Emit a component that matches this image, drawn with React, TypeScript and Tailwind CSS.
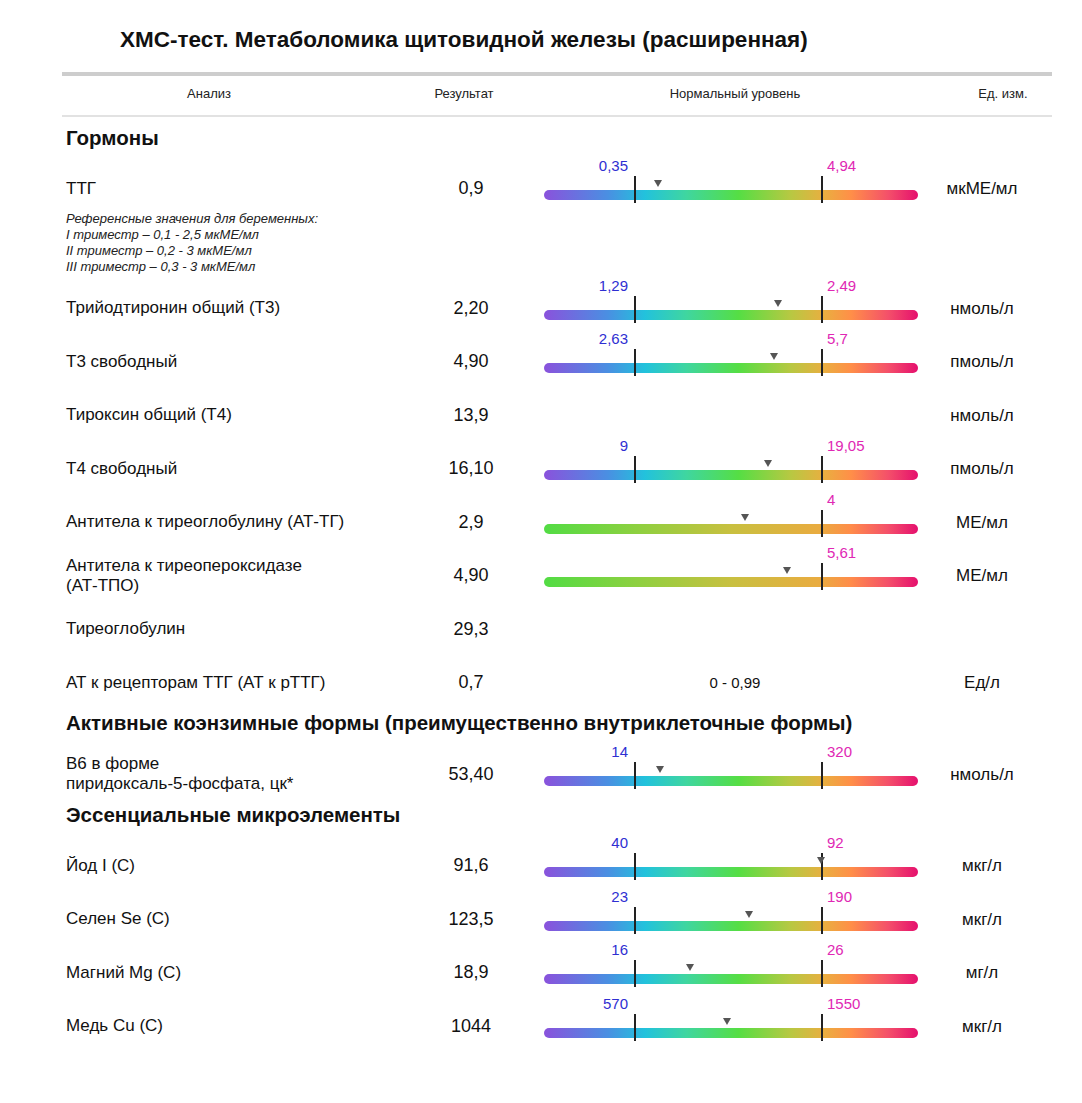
import React from 'react';

type Row = {
  name: string[];
  value: string;
  unit?: string;
  low?: string;
  high?: string;
  mark?: number; // x of triangle from bar start, px
  text?: string;
  note?: string[];
};

type Section = { title: string; rows: Row[] };

const sections: Section[] = [
  {
    title: 'Гормоны',
    rows: [
      {
        name: ['ТТГ'],
        value: '0,9',
        unit: 'мкМЕ/мл',
        low: '0,35',
        high: '4,94',
        mark: 114,
        note: [
          'Референсные значения для беременных:',
          'I триместр – 0,1 - 2,5 мкМЕ/мл',
          'II  триместр – 0,2 - 3 мкМЕ/мл',
          'III  триместр – 0,3 - 3 мкМЕ/мл',
        ],
      },
      { name: ['Трийодтиронин общий (Т3)'], value: '2,20', unit: 'нмоль/л', low: '1,29', high: '2,49', mark: 234 },
      { name: ['Т3 свободный'], value: '4,90', unit: 'пмоль/л', low: '2,63', high: '5,7', mark: 230 },
      { name: ['Тироксин общий (Т4)'], value: '13,9', unit: 'нмоль/л' },
      { name: ['Т4 свободный'], value: '16,10', unit: 'пмоль/л', low: '9', high: '19,05', mark: 224 },
      { name: ['Антитела к тиреоглобулину (АТ-ТГ)'], value: '2,9', unit: 'МЕ/мл', high: '4', mark: 201 },
      { name: ['Антитела к тиреопероксидазе', '(АТ-ТПО)'], value: '4,90', unit: 'МЕ/мл', high: '5,61', mark: 243 },
      { name: ['Тиреоглобулин'], value: '29,3' },
      { name: ['АТ к рецепторам ТТГ (АТ к рТТГ)'], value: '0,7', unit: 'Ед/л', text: '0 - 0,99' },
    ],
  },
  {
    title: 'Активные коэнзимные формы (преимущественно внутриклеточные формы)',
    rows: [
      { name: ['B6 в форме', 'пиридоксаль-5-фосфата, цк*'], value: '53,40', unit: 'нмоль/л', low: '14', high: '320', mark: 116 },
    ],
  },
  {
    title: 'Эссенциальные микроэлементы',
    rows: [
      { name: ['Йод I (С)'], value: '91,6', unit: 'мкг/л', low: '40', high: '92', mark: 277 },
      { name: ['Селен Se (С)'], value: '123,5', unit: 'мкг/л', low: '23', high: '190', mark: 205 },
      { name: ['Магний Mg (С)'], value: '18,9', unit: 'мг/л', low: '16', high: '26', mark: 146 },
      { name: ['Медь Cu (С)'], value: '1044', unit: 'мкг/л', low: '570', high: '1550', mark: 183 },
    ],
  },
];

function Scale({ row }: { row: Row }) {
  const twoSided = row.low !== undefined;
  return (
    <div className="relative h-full w-[374px]">
      <div
        className={
          twoSided
            ? 'absolute left-0 top-[28px] h-[10px] w-full rounded-full bg-[linear-gradient(to_right,#8a52dc_0%,#4a8fe2_17%,#22c2dc_27%,#3fd6a0_38%,#55de44_52%,#b8c842_66%,#eaae40_75%,#ff8f48_82%,#f4506a_92%,#e5106e_100%)]'
            : 'absolute left-0 top-[28px] h-[10px] w-full rounded-full bg-[linear-gradient(to_right,#52dc44_0%,#8ed040_25%,#c8c040_50%,#eaab40_74%,#ff8c4a_82%,#f4506a_92%,#e5106e_100%)]'
        }
      />
      {twoSided && (
        <>
          <div className="absolute left-[90px] top-[14px] h-[27px] w-[2px] bg-[#222]" />
          <div className="absolute right-[290px] top-[-4px] text-[15px] leading-[16px] text-[#2f2fd2]">{row.low}</div>
        </>
      )}
      <div className="absolute left-[277px] top-[14px] h-[27px] w-[2px] bg-[#222]" />
      <div className="absolute left-[283px] top-[-4px] text-[15px] leading-[16px] text-[#e028b4]">{row.high}</div>
      {row.mark !== undefined && (
        <div
          className="absolute top-[18px] h-0 w-0 border-l-[4px] border-r-[4px] border-t-[7px] border-l-transparent border-r-transparent border-t-[#555]"
          style={{ left: row.mark - 4 }}
        />
      )}
    </div>
  );
}

function DataRow({ row }: { row: Row }) {
  return (
    <>
      <div className="flex h-[53.5px] items-center pl-[4px]">
        <div className="w-[355px] text-[17px] leading-[20px] text-[#111]">
          {row.name.map((n) => (
            <div key={n}>{n}</div>
          ))}
        </div>
        <div className="w-[100px] text-center text-[18px] text-[#111]">{row.value}</div>
        <div className="ml-[23px] h-full">
          {row.high !== undefined ? (
            <Scale row={row} />
          ) : (
            <div className="flex h-full w-[374px] items-center justify-center pl-[8px] text-[15px] text-[#111]">{row.text}</div>
          )}
        </div>
        <div className="ml-[14px] w-[100px] text-center text-[17px] text-[#111]">{row.unit}</div>
      </div>
      {row.note && (
        <div className="mb-[7px] mt-[-5px] pl-[4px] text-[13px] italic leading-[16px] text-[#222]">
          {row.note.map((n) => (
            <div key={n}>{n}</div>
          ))}
        </div>
      )}
    </>
  );
}

export default function App() {
  return (
    <div className="min-h-[1103px] w-[1082px] bg-white font-['Liberation_Sans',Arial,sans-serif] text-[#111]">
      <div className="h-[72px] pl-[120px] pt-[26px]">
        <h1 className="text-[22.5px] font-bold leading-[28px]">ХМС-тест. Метаболомика щитовидной железы (расширенная)</h1>
      </div>
      <div className="ml-[62px] w-[990px]">
        <div className="h-[4px] bg-[#cdcdcd]" />
        <div className="mb-[7px] flex h-[41px] items-center border-b-2 border-[#e2e2e2] pb-[4px] text-[13px] text-[#222]">
          <div className="w-[294px] text-center">Анализ</div>
          <div className="w-[216px] text-center">Результат</div>
          <div className="w-[326px] text-center">Нормальный уровень</div>
          <div className="ml-[56px] w-[98px] text-center">Ед. изм.</div>
        </div>
        {sections.map((s) => (
          <div key={s.title}>
            <div className="mb-[10px] flex h-[28px] items-center pl-[4px] text-[20.5px] font-bold">{s.title}</div>
            {s.rows.map((r) => (
              <DataRow key={r.name.join(' ')} row={r} />
            ))}
          </div>
        ))}
      </div>
    </div>
  );
}
